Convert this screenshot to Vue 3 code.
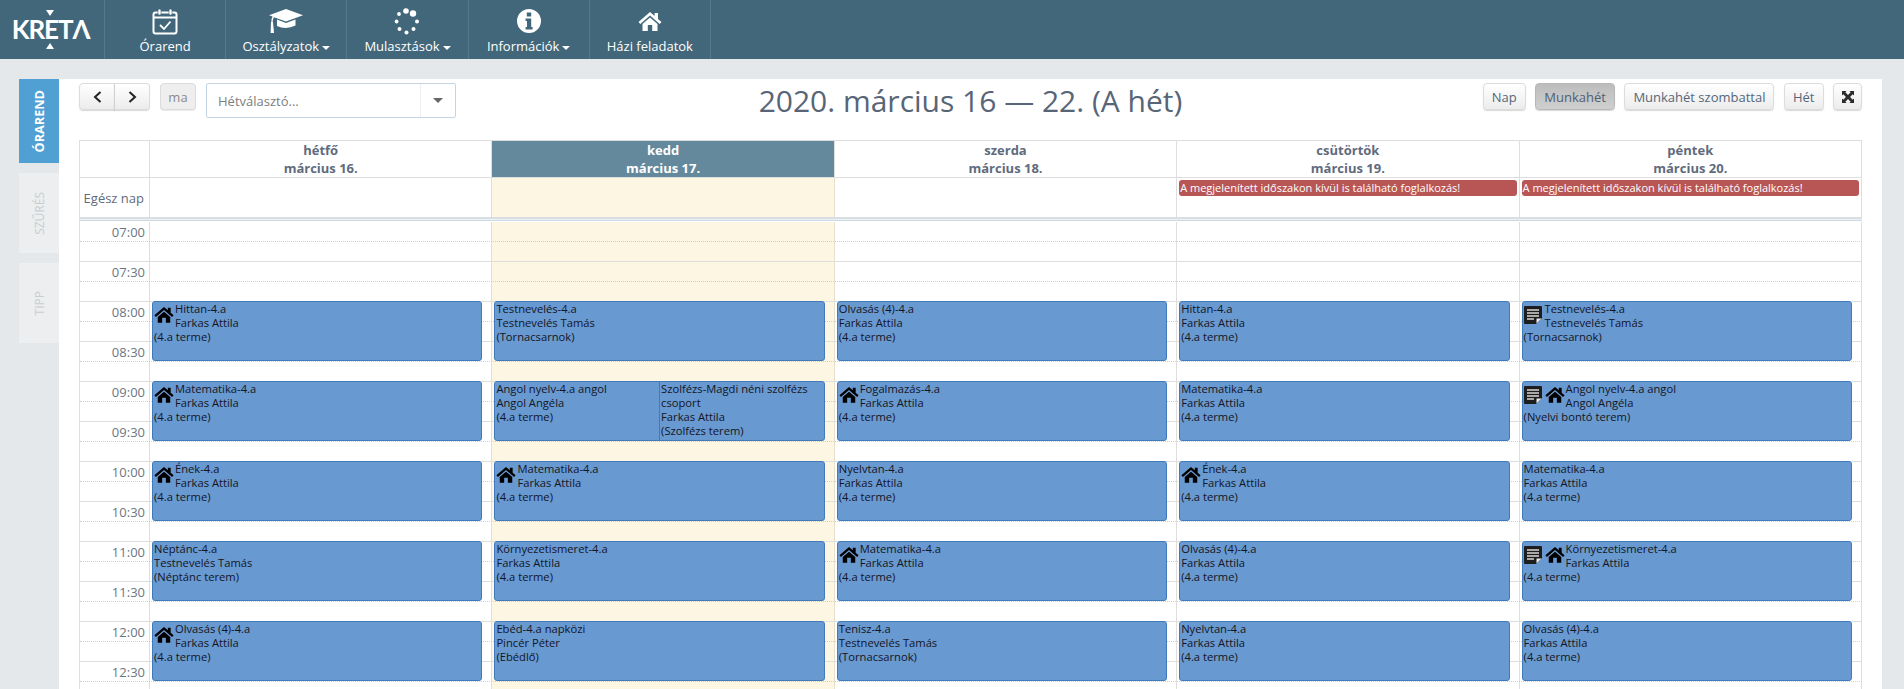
<script setup>
const navItems = [
  { label: 'Órarend', icon: 'cal', caret: false },
  { label: 'Osztályzatok', icon: 'cap', caret: true },
  { label: 'Mulasztások', icon: 'dots', caret: true },
  { label: 'Információk', icon: 'info', caret: true },
  { label: 'Házi feladatok', icon: 'home', caret: false },
]
const tabs = [
  { label: 'ÓRAREND', active: true },
  { label: 'SZŰRÉS', active: false },
  { label: 'TIPP', active: false },
]
const viewButtons = [
  { label: 'Nap' },
  { label: 'Munkahét', active: true },
  { label: 'Munkahét szombattal' },
  { label: 'Hét' },
]
const warn = 'A megjelenített időszakon kívül is található foglalkozás!'
const days = [
  { name: 'hétfő', date: 'március 16.' },
  { name: 'kedd', date: 'március 17.', today: true },
  { name: 'szerda', date: 'március 18.' },
  { name: 'csütörtök', date: 'március 19.', warn: true },
  { name: 'péntek', date: 'március 20.', warn: true },
]
const times = ['07:00','07:30','08:00','08:30','09:00','09:30','10:00','10:30','11:00','11:30','12:00','12:30']
const FA = 'Farkas Attila', R4 = '(4.a terme)', TT = 'Testnevelés Tamás', TC = '(Tornacsarnok)'
const e = (title, teacher, room, icons = '') => ({ title, teacher, room, note: icons.includes('n'), home: icons.includes('h') })
const schedule = [
  [[e('Hittan-4.a', FA, R4, 'h')], [e('Matematika-4.a', FA, R4, 'h')], [e('Ének-4.a', FA, R4, 'h')], [e('Néptánc-4.a', TT, '(Néptánc terem)')], [e('Olvasás (4)-4.a', FA, R4, 'h')]],
  [[e('Testnevelés-4.a', TT, TC)], [e('Angol nyelv-4.a angol', 'Angol Angéla', R4), e('Szolfézs-Magdi néni szolfézs csoport', FA, '(Szolfézs terem)')], [e('Matematika-4.a', FA, R4, 'h')], [e('Környezetismeret-4.a', FA, R4)], [e('Ebéd-4.a napközi', 'Pincér Péter', '(Ebédlő)')]],
  [[e('Olvasás (4)-4.a', FA, R4)], [e('Fogalmazás-4.a', FA, R4, 'h')], [e('Nyelvtan-4.a', FA, R4)], [e('Matematika-4.a', FA, R4, 'h')], [e('Tenisz-4.a', TT, TC)]],
  [[e('Hittan-4.a', FA, R4)], [e('Matematika-4.a', FA, R4)], [e('Ének-4.a', FA, R4, 'h')], [e('Olvasás (4)-4.a', FA, R4)], [e('Nyelvtan-4.a', FA, R4)]],
  [[e('Testnevelés-4.a', TT, TC, 'n')], [e('Angol nyelv-4.a angol', 'Angol Angéla', '(Nyelvi bontó terem)', 'nh')], [e('Matematika-4.a', FA, R4)], [e('Környezetismeret-4.a', FA, R4, 'nh')], [e('Olvasás (4)-4.a', FA, R4)]],
]
const homePath = 'M12 1 L0.5 11 L2.3 13 L12 4.6 L21.7 13 L23.5 11 L20 8 V2 H16.6 V5 Z M4.5 13 L12 6.6 L19.5 13 V20 H14.2 V14 H9.8 V20 H4.5 Z'
</script>

<template>
  <div class="page">
    <header class="topbar">
      <div class="logo">
        <svg class="tri" viewBox="0 0 8 6" width="8" height="6"><path d="M0 0H8L4 6Z" fill="#fff" /></svg>
        <span class="logo-text">KRETΛ</span>
        <svg class="tri" viewBox="0 0 8 6" width="8" height="6"><path d="M0 6H8L4 0Z" fill="#fff" /></svg>
      </div>
      <div v-for="item in navItems" :key="item.label" class="nav-item">
        <div class="nav-icon">
          <svg v-if="item.icon === 'cal'" width="26" height="27" viewBox="0 0 26 27">
            <rect x="1.5" y="4.5" width="23" height="21" rx="2" fill="none" stroke="#fff" stroke-width="2" />
            <path d="M2 9.5H24" stroke="#fff" stroke-width="2" />
            <rect x="6" y="1" width="3" height="6" rx="1.5" fill="#fff" stroke="#42677b" stroke-width=".6" />
            <rect x="17" y="1" width="3" height="6" rx="1.5" fill="#fff" stroke="#42677b" stroke-width=".6" />
            <path d="M8 17 L12 21 L18.5 13.5" fill="none" stroke="#fff" stroke-width="1.8" />
          </svg>
          <svg v-else-if="item.icon === 'cap'" width="34" height="24" viewBox="0 0 34 24">
            <path d="M17 0 L34 6.2 L17 12.5 L5 8.2 Q3.6 10 3.6 13 H2.4 Q2.4 9.4 3.6 7.6 L0 6.2 Z" fill="#fff" />
            <path d="M8 10.6 L17 14 L26.5 10.4 V16.5 Q17 21 8 17 Z" fill="#fff" />
            <path d="M2 13 H4 L5 24 H1.6 Z" fill="#fff" />
          </svg>
          <svg v-else-if="item.icon === 'dots'" width="26" height="27" viewBox="0 0 26 27">
            <circle cx="12" cy="3" r="2.8" fill="#fff" />
            <circle cx="19" cy="5.5" r="3.2" fill="#fff" />
            <circle cx="5" cy="6" r="1.9" fill="#fff" />
            <circle cx="2.6" cy="13.5" r="1.9" fill="#fff" />
            <circle cx="23" cy="13.5" r="2" fill="#fff" />
            <circle cx="5.5" cy="21" r="2" fill="#fff" />
            <circle cx="12.5" cy="24.5" r="2" fill="#fff" />
            <circle cx="19.5" cy="21" r="2" fill="#fff" />
          </svg>
          <svg v-else-if="item.icon === 'info'" width="24" height="24" viewBox="0 0 24 24">
            <path fill-rule="evenodd" fill="#fff" d="M12 0a12 12 0 1 0 0 24a12 12 0 0 0 0-24Z M9.8 3.6h4.4v3.8H9.8Z M8.6 9.4h5.6v8.6h1.4v2.6H8.6V18h1.4v-6H8.6Z" />
          </svg>
          <svg v-else width="24" height="20" viewBox="0 0 24 20"><path :d="homePath" fill="#fff" /></svg>
        </div>
        <div class="nav-label">{{ item.label }}<span v-if="item.caret" class="caret"></span></div>
      </div>
    </header>

    <main class="content">
      <nav class="tabs">
        <div v-for="tab in tabs" :key="tab.label" class="tab" :class="{ active: tab.active }"><span>{{ tab.label }}</span></div>
      </nav>

      <section class="panel">
        <div class="toolbar">
          <div class="tool-left">
            <div class="btn-group">
              <button class="btn arrow">
                <svg width="9" height="12" viewBox="0 0 9 12"><path d="M7.5 1 L2 6 L7.5 11" fill="none" stroke="#222" stroke-width="2" /></svg>
              </button>
              <button class="btn arrow">
                <svg width="9" height="12" viewBox="0 0 9 12"><path d="M1.5 1 L7 6 L1.5 11" fill="none" stroke="#222" stroke-width="2" /></svg>
              </button>
            </div>
            <button class="btn today-btn">ma</button>
            <div class="select">
              <span class="select-text">Hétválasztó...</span>
              <span class="select-arrow"><i></i></span>
            </div>
          </div>
          <h1 class="title">2020. március 16 — 22. (A hét)</h1>
          <div class="tool-right">
            <button v-for="b in viewButtons" :key="b.label" class="btn" :class="{ on: b.active }">{{ b.label }}</button>
            <button class="btn full">
              <svg width="12" height="12" viewBox="0 0 13 13">
                <path d="M0 0H5L3.6 1.4 6.5 4.3 9.4 1.4 8 0H13V5L11.6 3.6 8.7 6.5 11.6 9.4 13 8V13H8L9.4 11.6 6.5 8.7 3.6 11.6 5 13H0V8L1.4 9.4 4.3 6.5 1.4 3.6 0 5Z" fill="#2b2b2b" />
              </svg>
            </button>
          </div>
        </div>

        <div class="calendar">
          <div class="grid head">
            <div class="cell"></div>
            <div v-for="d in days" :key="d.name" class="cell day-head" :class="{ today: d.today }">
              <div>{{ d.name }}</div>
              <div>{{ d.date }}</div>
            </div>
          </div>
          <div class="grid allday">
            <div class="cell allday-label">Egész nap</div>
            <div v-for="d in days" :key="d.name" class="cell" :class="{ 'today-bg': d.today }">
              <div v-if="d.warn" class="warn">{{ warn }}</div>
            </div>
          </div>
          <div class="divider"></div>
          <div class="body">
            <div v-for="t in times" :key="t" class="grid row">
              <div class="cell time">{{ t }}</div>
              <div v-for="d in days" :key="d.name" class="cell" :class="{ 'today-bg': d.today }"></div>
            </div>
            <div class="grid events">
              <div></div>
              <div v-for="(col, ci) in schedule" :key="ci" class="event-col">
                <div v-for="(slot, si) in col" :key="si" class="event" :style="{ top: 80 + si * 80 + 'px' }">
                  <div v-for="(ev, ei) in slot" :key="ei" class="part">
                    <svg v-if="ev.note" class="ico" width="18" height="18" viewBox="0 0 18 18">
                      <path d="M1 0H17Q18 0 18 1V12L12 18H1Q0 18 0 17V1Q0 0 1 0Z" fill="#1d1d1d" />
                      <path d="M3 4H15M3 7H15M3 10H15M3 13H10" stroke="#d8d8d8" stroke-width="1.3" />
                      <path d="M12.5 17.5V12.5H17.5Z" fill="#e8e8e8" />
                    </svg>
                    <svg v-if="ev.home" class="ico home" width="20" height="17" viewBox="0 0 24 20"><path :d="homePath" fill="#000" /></svg>
                    <div class="ev-line">{{ ev.title }}</div>
                    <div class="ev-line">{{ ev.teacher }}</div>
                    <div class="ev-line">{{ ev.room }}</div>
                  </div>
                </div>
              </div>
            </div>
          </div>
        </div>
      </section>
    </main>
  </div>
</template>

<style>
html, body { margin: 0; height: 100%; overflow: hidden; background: #e5e8eb; }
</style>

<style scoped>
.page {
  height: 689px;
  overflow: hidden;
  background: #e5e8eb;
  font-family: "Open Sans", "Noto Sans", sans-serif;
  font-size: 12px;
  display: flex;
  flex-direction: column;
}
.topbar {
  flex: 0 0 59px;
  display: flex;
  background: #42677b;
  color: #fff;
}
.logo {
  flex: 0 0 105px;
  box-sizing: border-box;
  width: 105px;
  border-right: 1px solid #55788b;
  display: flex;
  flex-direction: column;
  align-items: center;
  justify-content: center;
}
.logo .tri { margin-left: -4px; display: block; }
.logo-text {
  font-family: "Lato", "Open Sans", sans-serif;
  font-size: 26px;
  line-height: 27px;
  font-weight: 700;
  letter-spacing: -1.1px;
  margin-left: -3px;
}
.nav-item {
  flex: 0 0 121.2px;
  box-sizing: border-box;
  border-right: 1px solid #55788b;
  display: flex;
  flex-direction: column;
  align-items: center;
}
.nav-icon {
  height: 37px;
  display: flex;
  align-items: center;
  justify-content: center;
  padding-top: 5px;
  box-sizing: border-box;
}
.nav-label {
  font-size: 13px;
  line-height: 18px;
  white-space: nowrap;
}
.caret {
  display: inline-block;
  margin-left: 3px;
  vertical-align: middle;
  border-left: 4px solid transparent;
  border-right: 4px solid transparent;
  border-top: 4px solid #fff;
}
.content {
  flex: 1;
  min-height: 0;
  display: flex;
  padding: 20px 22px 0 19px;
}
.tabs {
  flex: 0 0 40px;
  display: flex;
  flex-direction: column;
  gap: 10px;
}
.tab {
  height: 80px;
  background: #eceef0;
  color: #c9cdd1;
  font-size: 12px;
  display: flex;
  align-items: center;
  justify-content: center;
}
.tab span { writing-mode: vertical-rl; transform: rotate(180deg); }
.tab.active {
  height: 84px;
  background: #51a0d3;
  color: #fff;
  font-weight: 700;
  font-size: 12.7px;
}
.panel {
  flex: 1;
  min-width: 0;
  background: #fff;
  padding: 4px 20px 0;
}
.toolbar {
  height: 57px;
  display: grid;
  grid-template-columns: 1fr auto 1fr;
  align-items: start;
}
.tool-left { display: flex; align-items: flex-start; gap: 10px; }
.tool-right { display: flex; justify-content: flex-end; gap: 9.5px; }
.btn {
  height: 27px;
  box-sizing: border-box;
  padding: 0 8px;
  border: 1px solid #dcdcdc;
  border-radius: 4px;
  background: linear-gradient(#fff, #ececec);
  box-shadow: 0 1px 1px rgba(0,0,0,.16);
  color: #55677b;
  font: 13px "Open Sans", sans-serif;
  display: flex;
  align-items: center;
  justify-content: center;
}
.btn.on {
  background: linear-gradient(#bdbdbd, #cfcfcf);
  border-color: #b8b8b8;
  color: #4f6073;
}
.btn-group { display: flex; }
.arrow { width: 36px; padding: 0; border-radius: 4px 0 0 4px; }
.arrow + .arrow { border-left: 1px solid #d0d0d0; margin-left: -1px; border-radius: 0 4px 4px 0; }
.today-btn {
  width: 36px;
  padding: 0;
  background: #eeeeee;
  color: #8a8a8a;
  box-shadow: 0 1px 0 rgba(0,0,0,.08);
}
.full { width: 29px; padding: 0; }
.select {
  width: 250px;
  height: 35px;
  box-sizing: border-box;
  border: 1px solid #c5d4e4;
  border-radius: 2px;
  display: flex;
  align-items: center;
}
.select-text { flex: 1; padding-left: 11px; color: #7d7d7d; font-size: 13px; }
.select-arrow {
  width: 34px;
  height: 100%;
  border-left: 1px solid #eeeeee;
  display: flex;
  align-items: center;
  justify-content: center;
}
.select-arrow i {
  border-left: 5px solid transparent;
  border-right: 5px solid transparent;
  border-top: 5px solid #666;
}
.title {
  margin: 0;
  font-size: 30px;
  line-height: 35px;
  font-weight: 400;
  color: #586577;
  white-space: nowrap;
}
.calendar {
  border-left: 1px solid #dedede;
  border-top: 1px solid #dedede;
}
.grid {
  display: grid;
  grid-template-columns: 70px repeat(5, 1fr);
}
.cell {
  box-sizing: border-box;
  border-right: 1px solid #dedede;
  min-width: 0;
}
.head { height: 36px; border-bottom: 1px solid #dedede; box-sizing: content-box; }
.day-head {
  text-align: center;
  font-weight: 700;
  font-size: 13px;
  line-height: 18px;
  color: #5f6b7d;
}
.day-head.today { background: #64899c; color: #fff; }
.allday { height: 39px; }
.allday-label {
  display: flex;
  align-items: center;
  justify-content: flex-end;
  padding: 1px 5px 0 0;
  font-size: 13px;
  color: #5f6b7d;
}
.today-bg { background: #fcf6e2; border-right-color: #e6e0cf; }
.warn {
  margin: 2px 2px 0 2px;
  height: 16px;
  line-height: 15px;
  padding-left: 1px;
  border-radius: 3px;
  background: #b85656;
  color: #fff;
  font-size: 11px;
  white-space: nowrap;
  overflow: hidden;
}
.divider {
  height: 4px;
  box-sizing: border-box;
  border-top: 2px solid #d9dee3;
  border-bottom: 1px solid #cdd9e7;
  background: #eef1f4;
}
.body { position: relative; }
.row {
  height: 40px;
  box-sizing: border-box;
  border-top: 1px solid #dedede;
  position: relative;
}
.row:first-child { border-top-color: transparent; }
.row::after {
  content: "";
  position: absolute;
  left: 0;
  right: 0;
  top: 19px;
  border-top: 1px dotted #cfcfcf;
}
.time {
  text-align: right;
  padding: 2px 4px 0 0;
  font-size: 13px;
  line-height: 16px;
  color: #6a7685;
}
.events {
  position: absolute;
  inset: 0;
}
.event-col { position: relative; }
.event {
  position: absolute;
  left: 2px;
  right: 10px;
  height: 60px;
  box-sizing: border-box;
  display: flex;
  background: #6899d0;
  border: 1px solid #3f7abd;
  border-radius: 3px;
  color: #15151f;
  font-size: 11.2px;
  line-height: 14px;
}
.part {
  flex: 1 1 0;
  min-width: 0;
  padding: 0 1px;
}
.part + .part { border-left: 1px solid #3f7abd; }
.ico { float: left; display: block; margin: 4px 3px 0 0; }
.ico.home { margin: 4px 1px 0 0; }
</style>
